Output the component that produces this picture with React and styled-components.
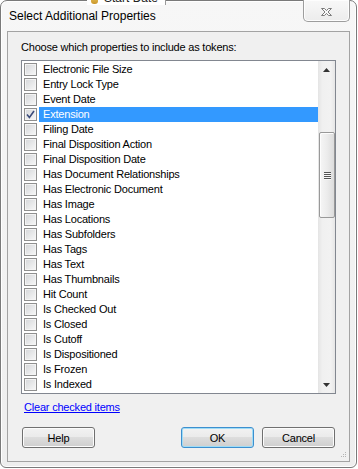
import React from 'react'
import styled, { createGlobalStyle } from 'styled-components'

const properties = [
    'Electronic File Size',
    'Entry Lock Type',
    'Event Date',
    'Extension',
    'Filing Date',
    'Final Disposition Action',
    'Final Disposition Date',
    'Has Document Relationships',
    'Has Electronic Document',
    'Has Image',
    'Has Locations',
    'Has Subfolders',
    'Has Tags',
    'Has Text',
    'Has Thumbnails',
    'Hit Count',
    'Is Checked Out',
    'Is Closed',
    'Is Cutoff',
    'Is Dispositioned',
    'Is Frozen',
    'Is Indexed',
]

const checked = ['Extension']
const selected = 'Extension'

// scroll thumb placement, px inside the track
const thumbOffset = 54
const thumbHeight = 86

const App = () => {
    return (
        <>
            <GlobalStyle />
            <Window>
                <DragChip>
                    <ChipIcon />
                    <span>Start Date</span>
                </DragChip>
                <TitleBar>
                    <Title>Select Additional Properties</Title>
                    <CloseButton>
                        <svg width="13" height="10" viewBox="0 0 13 10">
                            <path
                                d="M1.5 1.5 H4.5 L6.5 3.6 L8.5 1.5 H11.5 L8 5 L11.5 8.5 H8.5 L6.5 6.4 L4.5 8.5 H1.5 L5 5 Z"
                                fill="#fbfbfb"
                                stroke="#7b7b7b"
                                strokeWidth="1"
                                strokeLinejoin="round"
                            />
                        </svg>
                    </CloseButton>
                </TitleBar>
                <Panel>
                    <Prompt>Choose which properties to include as tokens:</Prompt>
                    <ListBox>
                        <Rows>
                            {properties.map(p => (
                                <Row key={p}>
                                    <CheckBox>
                                        {checked.includes(p) && (
                                            <svg width="9" height="9" viewBox="0 0 9 9">
                                                <path d="M1 4.6 L3.4 7.4 L8 1" fill="none" stroke="#3a4a7a" strokeWidth="1.6" />
                                            </svg>
                                        )}
                                    </CheckBox>
                                    <ItemText $selected={p === selected}>{p}</ItemText>
                                </Row>
                            ))}
                        </Rows>
                        <ScrollBar>
                            <ArrowButton>
                                <svg width="7" height="4" viewBox="0 0 7 4">
                                    <path d="M0 4 L3.5 0 L7 4 Z" fill="#333" />
                                </svg>
                            </ArrowButton>
                            <Track>
                                <Thumb style={{ marginTop: thumbOffset, height: thumbHeight }}>
                                    <Grip>
                                        <span />
                                        <span />
                                        <span />
                                        <span />
                                    </Grip>
                                </Thumb>
                            </Track>
                            <ArrowButton>
                                <svg width="7" height="4" viewBox="0 0 7 4">
                                    <path d="M0 0 L3.5 4 L7 0 Z" fill="#333" />
                                </svg>
                            </ArrowButton>
                        </ScrollBar>
                    </ListBox>
                    <ClearLink href="#">Clear checked items</ClearLink>
                    <ButtonRow>
                        <Button>Help</Button>
                        <ButtonGroup>
                            <Button $default>OK</Button>
                            <Button>Cancel</Button>
                        </ButtonGroup>
                    </ButtonRow>
                    <ResizeGrip width="7" height="7" viewBox="0 0 7 7">
                        <rect x="5" y="0" width="1" height="1" fill="#b4b4b4" />
                        <rect x="3" y="2" width="1" height="1" fill="#b4b4b4" />
                        <rect x="5" y="2" width="1" height="1" fill="#b4b4b4" />
                        <rect x="1" y="4" width="1" height="1" fill="#b4b4b4" />
                        <rect x="3" y="4" width="1" height="1" fill="#b4b4b4" />
                        <rect x="5" y="4" width="1" height="1" fill="#b4b4b4" />
                    </ResizeGrip>
                </Panel>
            </Window>
        </>
    )
}

export default App

const GlobalStyle = createGlobalStyle`
    body {
        margin: 0;
        background: #ffffff;
        font-family: "Liberation Sans", Arial, sans-serif;
    }
`

const Window = styled.div`
    position: relative;
    box-sizing: border-box;
    width: 357px;
    height: 468px;
    display: flex;
    flex-direction: column;
    padding: 0 6px 5px 6px;
    border: 1px solid #7a7a7a;
    border-radius: 7px 7px 6px 6px;
    background: linear-gradient(#f7f7f7, #eeeeee);
    box-shadow: inset 0 0 0 1px #ffffff;
`

const DragChip = styled.div`
    position: absolute;
    z-index: 1;
    left: 86px;
    top: -9px;
    height: 13px;
    display: flex;
    align-items: center;
    gap: 6px;
    padding: 0 7px 0 4px;
    background: #ffffff;
    border-right: 1px solid #9a9a9a;
    font-size: 12px;
    line-height: 13px;
    white-space: nowrap;
    color: #222;
`

const ChipIcon = styled.span`
    width: 7px;
    height: 10px;
    border-radius: 3px;
    background: linear-gradient(#f3d36b, #c9962a);
`

const TitleBar = styled.div`
    height: 30px;
    display: flex;
    justify-content: space-between;
    align-items: flex-start;
`

const Title = styled.div`
    padding: 8px 0 0 2px;
    font-size: 12px;
    line-height: 14px;
    color: #000;
`

const CloseButton = styled.div`
    box-sizing: border-box;
    width: 47px;
    height: 22px;
    margin-top: -1px;
    display: flex;
    align-items: center;
    justify-content: center;
    padding-top: 2px;
    border: 1px solid #9d9d9d;
    border-top: none;
    border-radius: 0 0 5px 5px;
    background: linear-gradient(#f8f8f8, #ececec);
    box-shadow: inset 0 0 0 1px #fdfdfd;
`

const Panel = styled.div`
    position: relative;
    flex: 1;
    display: flex;
    flex-direction: column;
    padding: 0 13px;
    border: 1px solid #a3a3a3;
    background: #f0f0f0;
    font-size: 11px;
    letter-spacing: -0.2px;
`

const Prompt = styled.div`
    margin-top: 9px;
    line-height: 13px;
    color: #000;
`

const ListBox = styled.div`
    margin-top: 6px;
    height: 334px;
    box-sizing: border-box;
    display: flex;
    border: 1px solid #828790;
    background: #ffffff;
`

const Rows = styled.div`
    flex: 1;
    padding-top: 1px;
    overflow: hidden;
`

const Row = styled.div`
    height: 15px;
    display: flex;
    align-items: center;
    padding-left: 2px;
`

const CheckBox = styled.span`
    box-sizing: border-box;
    width: 13px;
    height: 13px;
    flex: none;
    display: flex;
    align-items: center;
    justify-content: center;
    border: 1px solid #8f8f8f;
    background: linear-gradient(135deg, #d4d6d9, #f8f8f8);
    box-shadow: inset 0 0 0 1px #f4f4f4;
`

const ItemText = styled.span`
    flex: 1;
    height: 15px;
    margin-left: 2px;
    padding-left: 4px;
    line-height: 15px;
    white-space: nowrap;
    color: ${props => props.$selected ? '#ffffff' : '#000000'};
    background: ${props => props.$selected ? '#3399ff' : 'transparent'};
`

const ScrollBar = styled.div`
    width: 17px;
    flex: none;
    display: flex;
    flex-direction: column;
    background: linear-gradient(to right, #e4e4e4, #f0f0f0 25%, #f2f2f2 75%, #e6e6e6);
`

const ArrowButton = styled.div`
    height: 17px;
    display: flex;
    align-items: center;
    justify-content: center;
`

const Track = styled.div`
    flex: 1;
    display: flex;
    flex-direction: column;
    align-items: center;
`

const Thumb = styled.div`
    box-sizing: border-box;
    width: 16px;
    margin-left: 1px;
    display: flex;
    align-items: center;
    justify-content: center;
    border: 1px solid #999999;
    border-radius: 2px;
    background: linear-gradient(to right, #f6f6f6, #ececec 50%, #dcdcdc);
    box-shadow: inset 1px 1px 0 #fdfdfd;
`

const Grip = styled.div`
    display: flex;
    flex-direction: column;
    gap: 1px;
    span {
        width: 7px;
        height: 1px;
        background: #555;
        box-shadow: 0 1px 0 #f8f8f8;
    }
`

const ClearLink = styled.a`
    margin: 7px 0 0 3px;
    align-self: flex-start;
    line-height: 13px;
    color: #0000ff;
    text-decoration: underline;
`

const ButtonRow = styled.div`
    margin-top: 13px;
    padding: 0 1px;
    display: flex;
    justify-content: space-between;
`

const ButtonGroup = styled.div`
    display: flex;
    gap: 8px;
`

const Button = styled.button`
    box-sizing: border-box;
    width: 73px;
    height: 21px;
    padding: 0;
    font: inherit;
    letter-spacing: -0.2px;
    color: #000;
    border: 1px solid ${props => props.$default ? '#3c8fcf' : '#707070'};
    border-radius: 3px;
    background: linear-gradient(#f2f2f2, #ebebeb 45%, #dddddd 50%, #cfcfcf);
    box-shadow: inset 0 0 0 1px ${props => props.$default ? '#9fdcf6' : '#fcfcfc'};
`

const ResizeGrip = styled.svg`
    position: absolute;
    right: 2px;
    bottom: 2px;
`
